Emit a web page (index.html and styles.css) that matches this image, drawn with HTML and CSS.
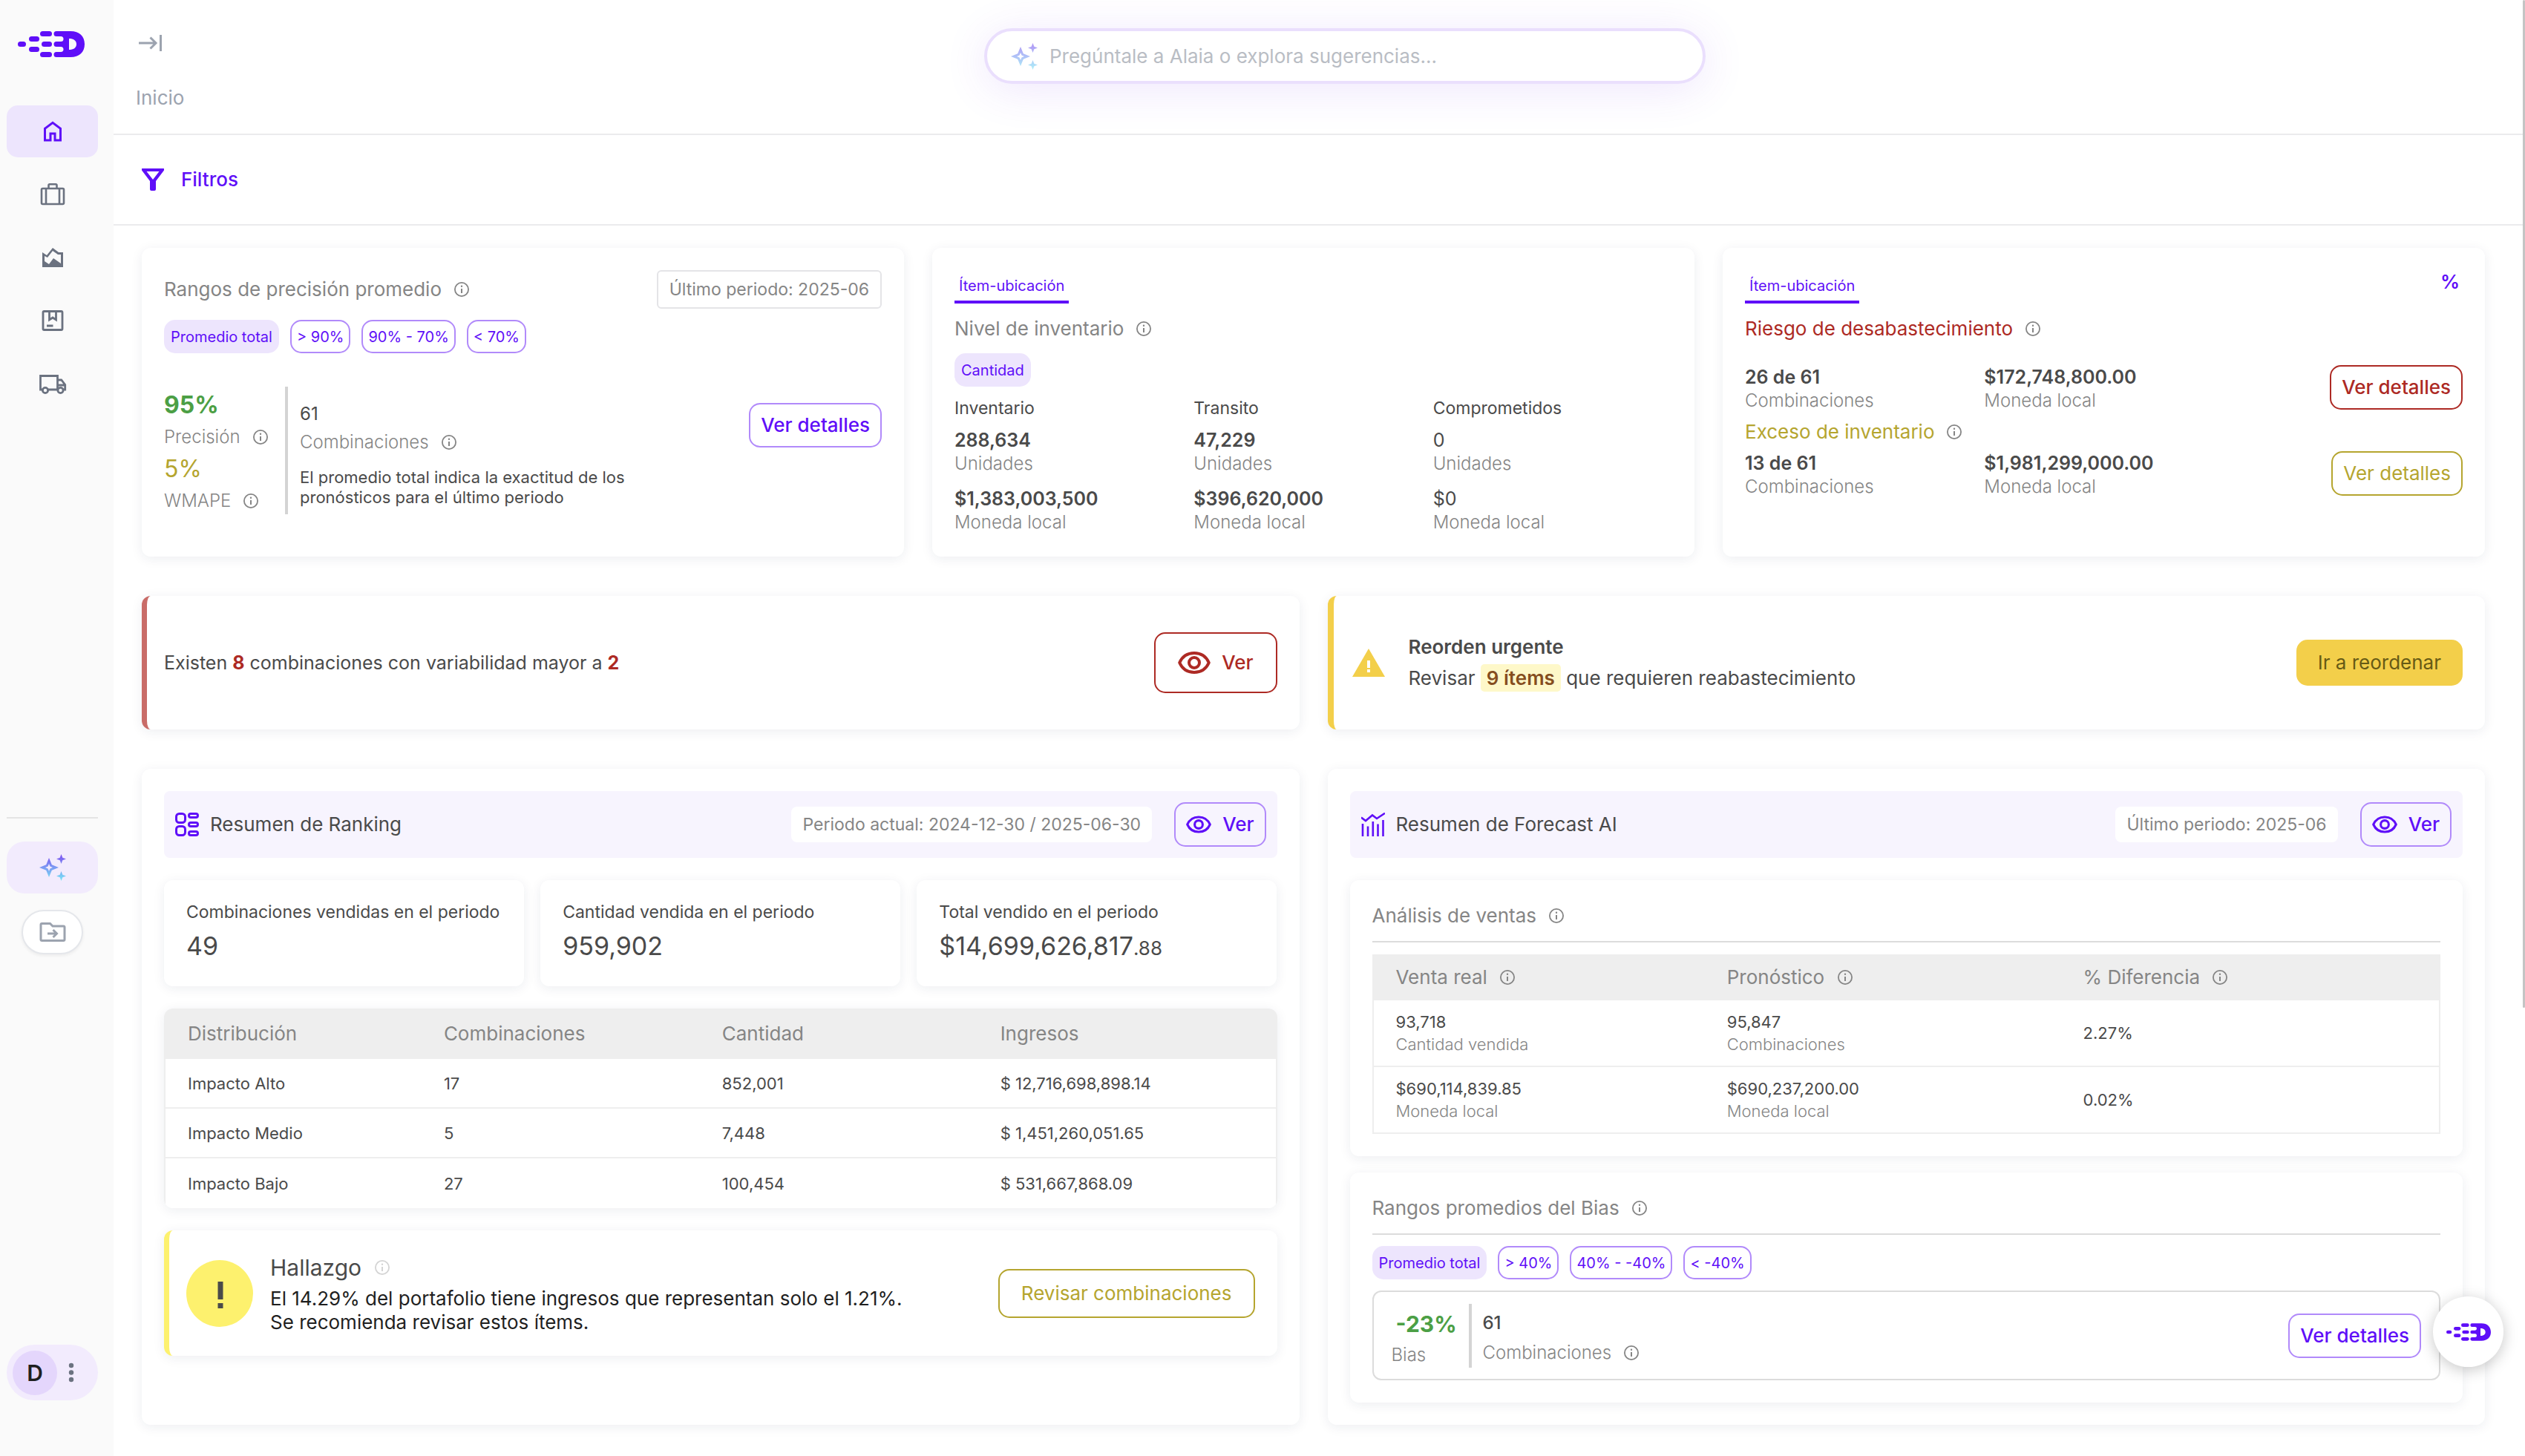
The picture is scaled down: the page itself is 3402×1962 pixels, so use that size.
FILE: index.html
```html
<!DOCTYPE html>
<html lang="es">
<head>
    <meta charset="UTF-8">
    <meta name="viewport" content="width=device-width, initial-scale=1">
    <title>Inicio</title>
    <link rel="stylesheet" href="styles.css">
</head>
<body>
    <!-- iconos -->
    <svg class="sprite" aria-hidden="true">
        <defs>
            <linearGradient id="brillo" x1="0" y1="0" x2="0" y2="36" gradientUnits="userSpaceOnUse">
                <stop offset="0" stop-color="#7d4ff0"/>
                <stop offset="1" stop-color="#79e6f5"/>
            </linearGradient>
            <symbol id="i-logo" viewBox="0 0 90 35">
                <rect x="0" y="14" width="11" height="7" rx="3.5"/>
                <rect x="15" y="7" width="14" height="7" rx="3.5"/>
                <rect x="15" y="21" width="14" height="7" rx="3.5"/>
                <rect x="30" y="0" width="16" height="7" rx="3.5"/>
                <rect x="32" y="14" width="14" height="7" rx="3.5"/>
                <rect x="30" y="28" width="16" height="7" rx="3.5"/>
                <path fill-rule="evenodd" d="M52 0H71C83 0 90 7 90 17.5S83 35 71 35H52a3.5 3.5 0 0 1 0-7h6a3.5 3.5 0 0 0 0-7h-6a3.5 3.5 0 0 1 0-7h6a3.5 3.5 0 0 0 0-7h-6a3.5 3.5 0 0 1 0-7zM69 10v15c6 0 10-2.500 10-7.500S75 10 69 10z"/>
            </symbol>
            <symbol id="i-info" viewBox="0 0 24 24">
                <path d="M11 17h2v-6h-2v6zm1-8a1.200 1.200 0 1 0 0-2.400A1.200 1.200 0 0 0 12 9zm0 13a10 10 0 1 1 0-20 10 10 0 0 1 0 20zm0-1.800a8.200 8.200 0 1 0 0-16.400 8.200 8.200 0 0 0 0 16.400z"/>
            </symbol>
            <symbol id="i-eye" viewBox="0 0 44 30">
                <path d="M2.200 15C6 6.500 13.500 2 22 2S38 6.500 41.800 15C38 23.500 30.500 28 22 28S6 23.500 2.200 15z" fill="none" stroke="currentColor" stroke-width="4" stroke-linejoin="round"/>
                <circle cx="22" cy="15" r="7" fill="none" stroke="currentColor" stroke-width="4"/>
            </symbol>
            <symbol id="i-stars" viewBox="0 0 36 36">
                <path fill="url(#brillo)" fill-rule="evenodd" d="M13 5l3.800 9.200L26 18l-9.200 3.800L13 31l-3.800-9.200L0 18l9.200-3.800zM13 13l-1.500 3.500L8 18l3.500 1.500L13 23l1.500-3.500L18 18l-3.500-1.500z"/>
                <path fill="url(#brillo)" d="M29.500 0l1.800 4.700L36 6.500l-4.700 1.800-1.800 4.700-1.800-4.700L23 6.500l4.700-1.800zM29.500 23l1.800 4.700 4.700 1.800-4.700 1.800-1.800 4.700-1.800-4.700-4.700-1.800 4.700-1.800z"/>
            </symbol>
        </defs>
    </svg>

    <div class="app">
        <aside class="sidebar">
            <a class="logo" href="#" aria-label="Portada"><svg><use href="#i-logo"/></svg></a>
            <nav class="menu" aria-label="Principal">
                <a class="menu-item activo" href="#" aria-label="Inicio">
                    <svg viewBox="0 0 24 24"><path d="M6 19h3v-6h6v6h3v-9l-6-4.500L6 10v9zm-2 2V9l8-6 8 6v12h-7v-6h-2v6H4z"/></svg>
                </a>
                <a class="menu-item" href="#" aria-label="Inventario">
                    <svg viewBox="0 0 36 36" fill="none" stroke="currentColor" stroke-width="2.600"><rect x="3" y="10" width="30" height="21" rx="1.500"/><path d="M12.500 10V5.500a1.200 1.200 0 0 1 1.200-1.200h8.600a1.200 1.200 0 0 1 1.200 1.200V10M9 10v21M27 10v21"/></svg>
                </a>
                <a class="menu-item" href="#" aria-label="Pronósticos">
                    <svg viewBox="0 0 36 36"><path fill-rule="evenodd" d="M4 11l6 4 8-10 8 6h6v20H4zM7 16v7l6 4 6-8 10 7V14h-4l-7-5-7 9z"/></svg>
                </a>
                <a class="menu-item" href="#" aria-label="Pedidos">
                    <svg viewBox="0 0 36 36" fill="none" stroke="currentColor" stroke-width="2.800"><rect x="5" y="5.500" width="26" height="25" rx="1.500"/><path d="M13.500 6v11l4.500-3 4.500 3V6M10 25h8.500"/></svg>
                </a>
                <a class="menu-item" href="#" aria-label="Envíos">
                    <svg viewBox="0 0 38 36" fill="none" stroke="currentColor" stroke-width="2.800"><path d="M5 26H2.500V7.500h23V26H13M25.500 13h5.200l5 6.500V26H33M25.500 20H35"/><circle cx="9" cy="27" r="3.600"/><circle cx="29.500" cy="27" r="3.600"/></svg>
                </a>
            </nav>
            <div class="atajos">
                <button class="atajo-ia" type="button" aria-label="Alaia"><svg><use href="#i-stars"/></svg></button>
                <button class="atajo-carpeta" type="button" aria-label="Mover a carpeta">
                    <svg viewBox="0 0 36 28" fill="none" stroke="currentColor" stroke-width="3"><path d="M2 4v20a1.500 1.500 0 0 0 1.500 1.500h29A1.500 1.500 0 0 0 34 24V7.500A1.500 1.500 0 0 0 32.500 6H18l-3.500-3.500h-11A1.500 1.500 0 0 0 2 4z"/><path d="M11 16h12M18.500 11l5 5-5 5"/></svg>
                </button>
            </div>
            <button class="perfil" type="button" aria-label="Perfil">
                <span class="avatar">D</span>
                <svg viewBox="0 0 8 28"><circle cx="4" cy="4" r="3.200"/><circle cx="4" cy="13.500" r="3.200"/><circle cx="4" cy="23" r="3.200"/></svg>
            </button>
        </aside>

        <main class="contenido">
            <header class="cabecera">
                <div class="cabecera-izq">
                    <button class="plegar" type="button" aria-label="Expandir menú">
                        <svg viewBox="0 0 32 22" fill="none" stroke="currentColor" stroke-width="3"><path d="M0 11h23M15.500 3.500L23 11l-7.500 7.500M29.500 0v22"/></svg>
                    </button>
                    <span class="migas">Inicio</span>
                </div>
                <label class="buscador">
                    <svg><use href="#i-stars"/></svg>
                    <input type="text" aria-label="Buscar" placeholder="Pregúntale a Alaia o explora sugerencias...">
                </label>
            </header>

            <div class="barra-filtros">
                <button class="filtros" type="button">
                    <svg viewBox="0 0 30 30"><path fill-rule="evenodd" d="M1.500 0h27A1.500 1.500 0 0 1 30 2.500L19 17v11a2 2 0 0 1-2 2h-4a2 2 0 0 1-2-2V17L0 2.500A1.500 1.500 0 0 1 1.500 0zM6.500 4L15 15l8.500-11z"/></svg>
                    Filtros
                </button>
            </div>

            <div class="tablero">
                <section class="fila tres">
                    <article class="tarjeta">
                        <div class="entre">
                            <h2 class="titulo">Rangos de precisión promedio <svg class="info"><use href="#i-info"/></svg></h2>
                            <span class="periodo borde">Último periodo: 2025-06</span>
                        </div>
                        <div class="chips">
                            <button class="chip lleno" type="button">Promedio total</button>
                            <button class="chip" type="button">&gt; 90%</button>
                            <button class="chip" type="button">90% - 70%</button>
                            <button class="chip" type="button">&lt; 70%</button>
                        </div>
                        <div class="precision">
                            <div class="precision-izq">
                                <div class="cifra verde">95%</div>
                                <div class="etiqueta">Precisión <svg class="info"><use href="#i-info"/></svg></div>
                                <div class="cifra oliva">5%</div>
                                <div class="etiqueta">WMAPE <svg class="info"><use href="#i-info"/></svg></div>
                            </div>
                            <div class="precision-der">
                                <div class="texto">61</div>
                                <div class="etiqueta">Combinaciones <svg class="info"><use href="#i-info"/></svg></div>
                                <p>El promedio total indica la exactitud de los pronósticos para el último periodo</p>
                            </div>
                            <button class="boton" type="button">Ver detalles</button>
                        </div>
                    </article>

                    <article class="tarjeta">
                        <div class="entre">
                            <button class="pestana" type="button">Ítem-ubicación</button>
                        </div>
                        <h2 class="titulo sep">Nivel de inventario <svg class="info"><use href="#i-info"/></svg></h2>
                        <div class="chips sep">
                            <button class="chip lleno" type="button">Cantidad</button>
                        </div>
                        <div class="niveles">
                            <div>
                                <h3>Inventario</h3>
                                <div class="dato"><strong>288,634</strong><span>Unidades</span></div>
                                <div class="dato"><strong>$1,383,003,500</strong><span>Moneda local</span></div>
                            </div>
                            <div>
                                <h3>Transito</h3>
                                <div class="dato"><strong>47,229</strong><span>Unidades</span></div>
                                <div class="dato"><strong>$396,620,000</strong><span>Moneda local</span></div>
                            </div>
                            <div>
                                <h3>Comprometidos</h3>
                                <div class="dato cero"><strong>0</strong><span>Unidades</span></div>
                                <div class="dato cero"><strong>$0</strong><span>Moneda local</span></div>
                            </div>
                        </div>
                    </article>

                    <article class="tarjeta">
                        <div class="entre">
                            <button class="pestana" type="button">Ítem-ubicación</button>
                            <button class="porcentaje" type="button">%</button>
                        </div>
                        <h2 class="titulo sep rojo">Riesgo de desabastecimiento <svg class="info"><use href="#i-info"/></svg></h2>
                        <div class="riesgo primero">
                            <div class="dato"><strong>26 de 61</strong><span>Combinaciones</span></div>
                            <div class="dato"><strong>$172,748,800.00</strong><span>Moneda local</span></div>
                            <button class="boton b-rojo" type="button">Ver detalles</button>
                        </div>
                        <h2 class="titulo oliva">Exceso de inventario <svg class="info"><use href="#i-info"/></svg></h2>
                        <div class="riesgo">
                            <div class="dato"><strong>13 de 61</strong><span>Combinaciones</span></div>
                            <div class="dato"><strong>$1,981,299,000.00</strong><span>Moneda local</span></div>
                            <button class="boton b-oliva" type="button">Ver detalles</button>
                        </div>
                    </article>
                </section>

                <section class="fila dos">
                    <article class="tarjeta aviso aviso-rojo">
                        <p>Existen <b class="rojo">8</b> combinaciones con variabilidad mayor a <b class="rojo">2</b></p>
                        <button class="boton grande b-rojo" type="button"><svg><use href="#i-eye"/></svg>Ver</button>
                    </article>
                    <article class="tarjeta aviso aviso-amarillo">
                        <svg class="alerta" viewBox="0 0 44 38"><path d="M22 0l22 38H0z"/><path d="M22 16v10M22 28v4" fill="none" stroke="#fff" stroke-width="4"/></svg>
                        <div class="reorden">
                            <strong>Reorden urgente</strong>
                            <p>Revisar <mark>9 ítems</mark> que requieren reabastecimiento</p>
                        </div>
                        <button class="boton-amarillo" type="button">Ir a reordenar</button>
                    </article>
                </section>

                <section class="fila dos">
                    <article class="tarjeta">
                        <div class="resumen">
                            <svg viewBox="0 0 32 32" fill="none" stroke="currentColor" stroke-width="3"><rect x="1.500" y="1.500" width="12" height="12" rx="4"/><rect x="1.500" y="18.500" width="12" height="12" rx="4"/><rect x="18.500" y="1.500" width="12" height="5" rx="2.500"/><rect x="18.500" y="13.500" width="12" height="5" rx="2.500"/><rect x="18.500" y="25.500" width="12" height="5" rx="2.500"/></svg>
                            <h2>Resumen de Ranking</h2>
                            <span class="periodo">Periodo actual: 2024-12-30 / 2025-06-30</span>
                            <button class="boton" type="button"><svg><use href="#i-eye"/></svg>Ver</button>
                        </div>
                        <div class="kpis">
                            <div class="kpi"><h3>Combinaciones vendidas en el periodo</h3><strong>49</strong></div>
                            <div class="kpi"><h3>Cantidad vendida en el periodo</h3><strong>959,902</strong></div>
                            <div class="kpi"><h3>Total vendido en el periodo</h3><strong>$14,699,626,817<small>.88</small></strong></div>
                        </div>
                        <table class="ranking">
                            <thead>
                                <tr><th>Distribución</th><th>Combinaciones</th><th>Cantidad</th><th>Ingresos</th></tr>
                            </thead>
                            <tbody>
                                <tr><td>Impacto Alto</td><td>17</td><td>852,001</td><td>$ 12,716,698,898.14</td></tr>
                                <tr><td>Impacto Medio</td><td>5</td><td>7,448</td><td>$ 1,451,260,051.65</td></tr>
                                <tr><td>Impacto Bajo</td><td>27</td><td>100,454</td><td>$ 531,667,868.09</td></tr>
                            </tbody>
                        </table>
                        <div class="hallazgo">
                            <svg class="exclama" viewBox="0 0 90 90"><circle cx="45" cy="45" r="45"/><path d="M42.500 29h7v24h-7zM42.500 58h7v7h-7z" fill="#4a4a4a"/></svg>
                            <div class="hallazgo-texto">
                                <h3>Hallazgo <svg class="info"><use href="#i-info"/></svg></h3>
                                <p>El 14.29% del portafolio tiene ingresos que representan solo el 1.21%.<br>Se recomienda revisar estos ítems.</p>
                            </div>
                            <button class="boton medio b-oliva" type="button">Revisar combinaciones</button>
                        </div>
                    </article>

                    <article class="tarjeta">
                        <div class="resumen">
                            <svg viewBox="0 0 32 32" fill="none" stroke="currentColor" stroke-width="2.600"><path d="M2 15v17M9 18.500V32M15.800 12v20M22.500 15.500V32M29.500 10v22"/><path d="M0 6.500l6 4.500 9-7.500 6 4.500L32 .8"/></svg>
                            <h2>Resumen de Forecast AI</h2>
                            <span class="periodo">Último periodo: 2025-06</span>
                            <button class="boton" type="button"><svg><use href="#i-eye"/></svg>Ver</button>
                        </div>
                        <div class="panel">
                            <h3 class="titulo linea">Análisis de ventas <svg class="info"><use href="#i-info"/></svg></h3>
                            <table class="ventas">
                                <thead>
                                    <tr>
                                        <th>Venta real <svg class="info"><use href="#i-info"/></svg></th>
                                        <th>Pronóstico <svg class="info"><use href="#i-info"/></svg></th>
                                        <th>% Diferencia <svg class="info"><use href="#i-info"/></svg></th>
                                    </tr>
                                </thead>
                                <tbody>
                                    <tr>
                                        <td>93,718<span>Cantidad vendida</span></td>
                                        <td>95,847<span>Combinaciones</span></td>
                                        <td>2.27%</td>
                                    </tr>
                                    <tr>
                                        <td>$690,114,839.85<span>Moneda local</span></td>
                                        <td>$690,237,200.00<span>Moneda local</span></td>
                                        <td>0.02%</td>
                                    </tr>
                                </tbody>
                            </table>
                        </div>
                        <div class="panel">
                            <h3 class="titulo linea">Rangos promedios del Bias <svg class="info"><use href="#i-info"/></svg></h3>
                            <div class="chips">
                                <button class="chip lleno" type="button">Promedio total</button>
                                <button class="chip" type="button">&gt; 40%</button>
                                <button class="chip" type="button">40% - -40%</button>
                                <button class="chip" type="button">&lt; -40%</button>
                            </div>
                            <div class="bias">
                                <div class="bias-izq">
                                    <div class="cifra verde">-23%</div>
                                    <div class="etiqueta">Bias</div>
                                </div>
                                <div class="bias-der">
                                    <strong>61</strong>
                                    <div class="etiqueta">Combinaciones <svg class="info"><use href="#i-info"/></svg></div>
                                </div>
                                <button class="boton" type="button">Ver detalles</button>
                            </div>
                        </div>
                    </article>
                </section>
            </div>
        </main>
    </div>

    <button class="flotante" type="button" aria-label="Asistente"><svg><use href="#i-logo"/></svg></button>
    <div class="scroll"></div>
</body>
</html>
```

FILE: styles.css
```css
*{
    box-sizing: border-box;
}
body{
    margin: 0;
    background: #fff;
    color: #4a4a4a;
    font-family: Inter, "Open Sans", sans-serif;
    font-size: 26px;
    line-height: 32px;
}
h2, h3, p{
    margin: 0;
    font-size: 26px;
    font-weight: 400;
}
button{
    font-family: inherit;
    font-size: 26px;
    line-height: 32px;
    padding: 0;
    border: 0;
    background: none;
    color: inherit;
    cursor: pointer;
    white-space: nowrap;
}
svg{
    display: block;
    flex: none;
    fill: currentColor;
}
svg[fill="none"]{
    fill: none;
}
.sprite{
    position: absolute;
    width: 0;
    height: 0;
}
.app{
    display: flex;
    min-height: 100vh;
}

/* barra lateral */
.sidebar{
    position: sticky;
    top: 0;
    flex: none;
    display: flex;
    flex-direction: column;
    width: 153px;
    height: 100vh;
    padding: 42px 21px 75px 9px;
    background: #fafafa;
}
.logo{
    margin-left: 15px;
    color: #5f0ff8;
}
.logo svg{
    width: 90px;
    height: 35px;
}
.menu{
    display: flex;
    flex-direction: column;
    gap: 15px;
    margin-top: 65px;
    margin-bottom: 23px;
}
.menu-item{
    display: flex;
    align-items: center;
    justify-content: center;
    height: 70px;
    border-radius: 15px;
    color: #6b7280;
}
.menu-item svg{
    width: 38px;
    height: 36px;
}
.menu-item.activo{
    background: #ede5fd;
    color: #5f0ff8;
}
.atajos{
    display: flex;
    flex-direction: column;
    align-items: center;
    gap: 22px;
    margin-top: auto;
    margin-bottom: auto;
    padding-top: 31px;
    border-top: 2px solid #e5e5e5;
}
.atajo-ia{
    display: flex;
    align-items: center;
    justify-content: center;
    width: 100%;
    height: 70px;
    border-radius: 24px;
    background: #f2ebfd;
}
.atajo-ia svg{
    width: 36px;
    height: 36px;
}
.atajo-carpeta{
    display: flex;
    align-items: center;
    justify-content: center;
    width: 83px;
    height: 60px;
    border: 2px solid #e5e7eb;
    border-radius: 30px;
    background: #fff;
    box-shadow: 0 2px 4px rgba(0, 0, 0, .06);
    color: #9ca3af;
}
.atajo-carpeta svg{
    width: 36px;
    height: 28px;
}
.perfil{
    display: flex;
    align-items: center;
    gap: 15px;
    height: 75px;
    padding-left: 8px;
    border-radius: 38px;
    background: #f2ebfd;
    color: #6b7280;
}
.perfil svg{
    width: 8px;
    height: 28px;
}
.avatar{
    width: 60px;
    border-radius: 50%;
    background: #e4d6fc;
    color: #1f1f1f;
    font-size: 30px;
    font-weight: 600;
    line-height: 60px;
}

/* cabecera */
.contenido{
    flex: 1;
    min-width: 0;
}
.cabecera{
    display: flex;
    align-items: flex-start;
    min-height: 182px;
    padding-top: 38px;
    border-bottom: 2px solid #ebebed;
}
.cabecera-izq{
    display: flex;
    flex-direction: column;
    gap: 38px;
    width: 69px;
    padding-left: 30px;
    color: #9ca3af;
}
.plegar{
    height: 40px;
    padding-left: 4px;
}
.plegar svg{
    width: 32px;
    height: 22px;
}
.buscador{
    display: flex;
    align-items: center;
    gap: 16px;
    width: 972px;
    max-width: 70%;
    height: 75px;
    margin: 0 auto;
    padding: 0 32px;
    border: 4px solid #eadffd;
    border-radius: 38px;
    background: #fff;
    box-shadow: 0 8px 60px rgba(124, 58, 237, .12);
}
.buscador svg{
    width: 36px;
    height: 36px;
    opacity: .6;
}
.buscador input{
    flex: 1;
    padding: 0;
    border: 0;
    outline: 0;
    background: none;
    font: inherit;
    color: #4a4a4a;
}
.buscador input::placeholder{
    color: #b9bdc4;
    opacity: 1;
}
.barra-filtros{
    padding: 44px 38px;
    border-bottom: 2px solid #ebebed;
}
.filtros{
    display: flex;
    align-items: center;
    gap: 23px;
    color: #5f0ff8;
    font-weight: 500;
}
.filtros svg{
    width: 30px;
    height: 30px;
}

/* tarjetas */
.tablero{
    display: flex;
    flex-direction: column;
    gap: 53px;
    padding: 30px 54px 36px 38px;
}
.fila{
    display: grid;
    gap: 38px;
}
.tres{
    grid-template-columns: repeat(3, 1fr);
}
.dos{
    grid-template-columns: repeat(2, 1fr);
}
.tarjeta, .panel, .kpi, .ranking, .hallazgo{
    min-width: 0;
    background: #fff;
    border-radius: 12px;
    box-shadow: 0 3px 16px rgba(30, 41, 80, .08);
}
.tarjeta{
    padding: 30px;
}
.entre{
    display: flex;
    align-items: center;
    justify-content: space-between;
}
.titulo{
    display: flex;
    align-items: center;
    gap: 15px;
    color: #858585;
    line-height: 36px;
}
.sep{
    margin-top: 16px;
}
.info{
    width: 24px;
    height: 24px;
    color: #858585;
}
.rojo{
    color: #ad2a24;
}
.oliva{
    color: #b5a52f;
}
.verde{
    color: #4c9f45;
    font-weight: 700;
}
.periodo{
    padding: 8px 15px;
    border-radius: 8px;
    background: #fff;
    color: #858585;
    font-size: 23px;
}
.periodo.borde{
    border: 2px solid #e4e4e7;
    border-radius: 6px;
}
.chips{
    display: flex;
    gap: 15px;
    margin-top: 15px;
}
.chip{
    height: 45px;
    padding: 0 7px;
    border: 2px solid #b18afa;
    border-radius: 15px;
    color: #5f0ff8;
    font-size: 20px;
}
.chip.lleno{
    border-color: #ede5fd;
    background: #ede5fd;
}
.boton{
    display: flex;
    align-items: center;
    justify-content: center;
    gap: 15px;
    height: 60px;
    padding: 0 14px;
    border: 2px solid #b18afa;
    border-radius: 15px;
    color: #5f0ff8;
    font-weight: 500;
}
.boton svg{
    width: 34px;
    height: 24px;
}
.boton.medio{
    height: 66px;
    padding: 0 29px;
}
.boton.grande{
    height: 82px;
    padding: 0 30px;
}
.boton.grande svg{
    width: 44px;
    height: 30px;
}
.b-rojo{
    border-color: #ad2a24;
    color: #ad2a24;
}
.b-oliva{
    border-color: #b5a52f;
    color: #b5a52f;
    font-weight: 400;
}
.pestana{
    height: 45px;
    padding: 0 6px;
    border-bottom: 4px solid #5f0ff8;
    color: #5f0ff8;
    font-size: 20px;
}
.porcentaje{
    align-self: flex-start;
    padding-right: 4px;
    color: #5f0ff8;
    font-weight: 600;
}

/* rangos de precisión */
.precision{
    display: flex;
    align-items: flex-start;
    margin-top: 45px;
}
.precision-izq{
    width: 167px;
    height: 172px;
    padding-top: 3px;
    border-right: 4px solid #d4d4d4;
    line-height: 43px;
}
.precision-der{
    flex: 1;
    padding: 18px 16px 0;
    line-height: 38px;
}
.precision-der .texto{
    font-size: 24px;
}
.precision-der p{
    max-width: 480px;
    margin-top: 15px;
    font-size: 22px;
    line-height: 27px;
}
.precision .boton{
    margin-top: 22px;
}
.cifra{
    font-size: 32px;
}
.etiqueta{
    display: flex;
    align-items: center;
    gap: 15px;
    color: #858585;
    font-size: 24px;
    font-weight: 300;
}

/* inventario */
.niveles{
    display: grid;
    grid-template-columns: repeat(3, 1fr);
    margin-top: 13px;
}
.niveles h3{
    margin-bottom: 11px;
    font-size: 23px;
}
.niveles .dato + .dato{
    margin-top: 15px;
}
.dato strong, .dato span{
    display: block;
}
.dato strong{
    font-weight: 600;
    font-size: 25px;
}
.dato span{
    color: #858585;
    font-size: 24px;
    font-weight: 300;
}
.dato.cero strong{
    font-weight: 400;
}
.riesgo{
    display: grid;
    grid-template-columns: 1fr 1fr 1fr;
    align-items: start;
    margin-top: 8px;
    margin-bottom: 8px;
}
.riesgo.primero{
    margin-top: 31px;
}
.riesgo .boton{
    justify-self: end;
}

/* avisos */
.aviso{
    display: flex;
    align-items: center;
    justify-content: space-between;
    min-height: 180px;
}
.aviso-rojo{
    padding-left: 23px;
    border-left: 7px solid #c96c68;
}
.aviso-rojo p{
    font-size: 25px;
}
.aviso-amarillo{
    padding-left: 25px;
    border-left: 8px solid #f3cf4a;
}
.alerta{
    width: 44px;
    height: 38px;
    color: #f3cf4a;
}
.reorden{
    flex: 1;
    padding-left: 32px;
}
.reorden strong{
    font-weight: 600;
}
.reorden p{
    margin-top: 10px;
}
mark{
    padding: 3px 8px;
    border-radius: 5px;
    background: #fef8c9;
    color: #854d1e;
    font-weight: 600;
}
.boton-amarillo{
    height: 62px;
    padding: 0 29px;
    border-radius: 15px;
    background: #f3cf4a;
    color: #665a15;
}

/* resumen */
.resumen{
    display: flex;
    align-items: center;
    height: 90px;
    margin-bottom: 30px;
    padding: 0 15px;
    border-radius: 8px;
    background: #f7f4fe;
}
.resumen > svg{
    width: 32px;
    height: 32px;
    color: #5f0ff8;
}
.resumen h2{
    flex: 1;
    padding-left: 15px;
}
.resumen .periodo{
    margin-right: 30px;
}
.kpis{
    display: grid;
    grid-template-columns: repeat(3, 1fr);
    gap: 22px;
}
.kpi{
    padding: 27px 30px 32px;
}
.kpi h3{
    font-size: 23px;
    white-space: nowrap;
}
.kpi strong{
    display: block;
    margin-top: 8px;
    font-size: 34px;
    font-weight: 400;
    line-height: 44px;
}
.kpi small{
    font-size: 26px;
    line-height: 26px;
}
table{
    width: 100%;
    border-collapse: separate;
    border-spacing: 0;
    table-layout: fixed;
}
th{
    padding: 0 32px;
    background: #eee;
    color: #858585;
    font-weight: 400;
    text-align: left;
}
td{
    padding: 0 32px;
    font-size: 22px;
}
.ranking{
    margin: 30px 0;
    overflow: hidden;
}
.ranking th{
    height: 68px;
}
.ranking td{
    height: 67px;
    border-bottom: 2px solid #eee;
}
.ranking tr:last-child td{
    border-bottom: 0;
}
.ranking th:first-child{
    width: 23%;
}
.ranking th:nth-child(2), .ranking th:nth-child(3){
    width: 25%;
}
.ranking td:first-child{
    border-left: 2px solid #eee;
    padding-left: 30px;
}
.ranking td:last-child{
    border-right: 2px solid #eee;
}
.hallazgo{
    display: flex;
    align-items: center;
    min-height: 169px;
    padding: 0 30px 0 23px;
    border-left: 7px solid #fdf16e;
}
.exclama{
    width: 90px;
    height: 90px;
    color: #fdf16e;
}
.hallazgo-texto{
    flex: 1;
    padding-left: 23px;
}
.hallazgo h3{
    display: flex;
    align-items: center;
    gap: 16px;
    margin-bottom: 6px;
    font-size: 30px;
    line-height: 40px;
}
.hallazgo .info{
    color: #d4d4d4;
}
.hallazgo p{
    color: #1f1f1f;
}

/* forecast */
.panel{
    padding: 30px;
}
.panel + .panel{
    margin-top: 22px;
}
.linea{
    padding-bottom: 16px;
    border-bottom: 2px solid #dcdcdc;
}
.ventas{
    margin-top: 16px;
}
.ventas th{
    height: 62px;
}
.ventas th .info{
    display: inline-block;
    margin-left: 8px;
    vertical-align: -3px;
}
.ventas th:first-child{
    width: 31%;
}
.ventas th:nth-child(2){
    width: calc(100% / 3);
}
.ventas td{
    padding: 14px 32px;
    border-bottom: 2px solid #eee;
    line-height: 30px;
}
.ventas td span{
    display: block;
    color: #858585;
    font-weight: 300;
}
.ventas td:first-child{
    padding-left: 30px;
    border-left: 2px solid #eee;
}
.ventas td:last-child{
    border-right: 2px solid #eee;
}
.bias{
    display: flex;
    align-items: center;
    margin-top: 15px;
    padding: 15px 24px;
    border: 2px solid #dcdcdc;
    border-radius: 12px;
}
.bias-izq{
    width: 108px;
    height: 86px;
    padding-top: 6px;
    border-right: 4px solid #d4d4d4;
    line-height: 42px;
}
.bias-izq .cifra{
    padding-left: 6px;
    font-size: 30px;
}
.bias-der{
    flex: 1;
    padding: 6px 15px 0;
    line-height: 40px;
}
.bias-der strong{
    font-size: 24px;
    font-weight: 500;
}

.flotante{
    position: fixed;
    right: 29px;
    bottom: 120px;
    display: flex;
    align-items: center;
    justify-content: center;
    width: 95px;
    height: 95px;
    border-radius: 50%;
    background: #fff;
    box-shadow: 0 4px 20px rgba(0, 0, 0, .22);
    color: #5f0ff8;
}
.flotante svg{
    width: 60px;
    height: 24px;
}
.scroll{
    position: fixed;
    top: 0;
    right: 0;
    width: 3px;
    height: 1358px;
    border-radius: 3px;
    background: #c4c4c4;
}
```
